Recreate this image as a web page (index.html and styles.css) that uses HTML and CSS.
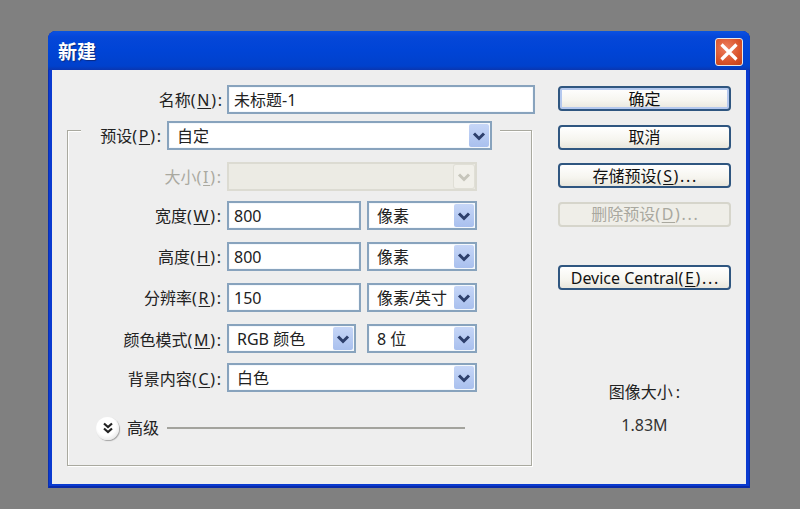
FILE: index.html
```html
<!DOCTYPE html>
<html lang="zh">
<head>
<meta charset="utf-8">
<title>新建</title>
<link rel="stylesheet" href="styles.css">
</head>
<body>
<svg class="defs" width="0" height="0" aria-hidden="true"><defs>
<symbol id="chev" viewBox="0 0 20 24"><path d="M5 9.5 L10 14.5 L15 9.5" fill="none" stroke="currentColor" stroke-width="3"/></symbol>
</defs></svg>
<div class="dialog">
  <div class="titlebar">
    <span class="title">新建</span>
    <span class="close"><svg viewBox="0 0 20 20" width="20" height="20"><path d="M2.5 2.5 L17.500 17.500 M17.500 2.500 L2.500 17.500" stroke="#fff" stroke-width="3.2" fill="none"/></svg></span>
  </div>
  <div class="body">
    <div class="left">
      <div class="name-row">
        <label class="lbl lbl-name">名称<span class="key">(<u>N</u>):</span></label>
        <div class="field field-name">未标题-1</div>
      </div>
      <div class="group">
        <div class="preset">
          <label class="lbl lbl-preset">预设<span class="key">(<u>P</u>):</span></label>
          <div class="select select-preset"><span class="val">自定</span><span class="arrow"><svg width="20" height="24"><use href="#chev"/></svg></span></div>
        </div>
        <div class="row row-first">
          <label class="lbl lbl-off">大小<span class="key">(<u>I</u>):</span></label>
          <div class="select select-wide is-off"><span class="val"></span><span class="arrow"><svg width="20" height="24"><use href="#chev"/></svg></span></div>
        </div>
        <div class="row gap-s">
          <label class="lbl">宽度<span class="key">(<u>W</u>):</span></label>
          <div class="field field-num">800</div>
          <div class="select select-unit"><span class="val">像素</span><span class="arrow"><svg width="20" height="24"><use href="#chev"/></svg></span></div>
        </div>
        <div class="row gap-l">
          <label class="lbl">高度<span class="key">(<u>H</u>):</span></label>
          <div class="field field-num">800</div>
          <div class="select select-unit"><span class="val">像素</span><span class="arrow"><svg width="20" height="24"><use href="#chev"/></svg></span></div>
        </div>
        <div class="row gap-l">
          <label class="lbl">分辨率<span class="key">(<u>R</u>):</span></label>
          <div class="field field-num">150</div>
          <div class="select select-unit"><span class="val">像素/英寸</span><span class="arrow"><svg width="20" height="24"><use href="#chev"/></svg></span></div>
        </div>
        <div class="row gap-l">
          <label class="lbl lbl-low">颜色模式<span class="key">(<u>M</u>):</span></label>
          <div class="select select-mode"><span class="val">RGB 颜色</span><span class="arrow"><svg width="20" height="24"><use href="#chev"/></svg></span></div>
          <div class="select select-unit"><span class="val">8 位</span><span class="arrow"><svg width="20" height="24"><use href="#chev"/></svg></span></div>
        </div>
        <div class="row gap-s">
          <label class="lbl lbl-low">背景内容<span class="key">(<u>C</u>):</span></label>
          <div class="select select-wide"><span class="val">白色</span><span class="arrow"><svg width="20" height="24"><use href="#chev"/></svg></span></div>
        </div>
        <div class="advanced">
          <span class="round"><svg width="14" height="14" viewBox="0 0 14 14"><path d="M3 2.5 L7 6 L11 2.500 M3 7.500 L7 11 L11 7.500" fill="none" stroke="#222" stroke-width="2.2"/></svg></span>
          <span class="adv-text">高级</span>
          <span class="adv-line"></span>
        </div>
      </div>
    </div>
    <div class="right">
      <button class="btn btn-default">确定</button>
      <button class="btn">取消</button>
      <button class="btn">存储预设<span class="key">(<u>S</u>)...</span></button>
      <button class="btn btn-off">删除预设<span class="key">(<u>D</u>)...</span></button>
      <button class="btn btn-device">Device Central<span class="key">(<u>E</u>)...</span></button>
      <div class="size-label">图像大小<span class="colon">:</span></div>
      <div class="size-value">1.83M</div>
    </div>
  </div>
</div>
</body>
</html>
```
FILE: styles.css
```css
* { box-sizing: border-box; }
html, body { margin: 0; height: 100%; }
body {
  background: #808080;
  padding: 31px 50px 21px 48px;
  font: 16px/1 "Noto Sans", "Noto Sans CJK SC", sans-serif;
  color: #222;
  overflow: hidden;
}
.defs { position: absolute; }
u { text-underline-offset: 2px; }
.key { letter-spacing: 1.7px; margin-right: -1.7px; }
.colon { margin-left: 3px; }
.dialog {
  height: 457px;
  display: flex;
  flex-direction: column;
  background: #0a3ad0;
  border-radius: 8px 8px 0 0;
  box-shadow: inset 1px 0 #0a2fb0, inset -1px 0 #0a2fb0, inset 0 -2px #0a2aa8;
  padding: 0 4px 4px;
}
.titlebar {
  height: 39px;
  margin: 0 -4px;
  padding: 7px 7px 0 10px;
  flex: none;
  display: flex;
  justify-content: space-between;
  align-items: flex-start;
  border-radius: 8px 8px 0 0;
  background: linear-gradient(#0a55dc 0, #0a4de0 2px, #0547d8 6px, #0044d6 50%, #0041cc 90%, #0a36b0 100%);
}
.title {
  font-size: 19px;
  font-weight: 700;
  color: #fff;
  line-height: 28px;
  text-shadow: 1px 1px 1px #0a2a80;
}
.close {
  width: 28px;
  height: 28px;
  display: flex;
  align-items: center;
  justify-content: center;
  border: 1px solid #e8e8e8;
  border-radius: 3px;
  background: radial-gradient(circle at 40% 35%, #ee8060, #d9532a 60%, #c23e18);
}
.body {
  flex: 1;
  display: flex;
  background: #eeeeee;
  padding: 15px 15px 0;
  gap: 23px;
}
.left { width: 468px; }
.name-row { display: flex; height: 29px; }
.lbl {
  display: flex;
  align-items: center;
  justify-content: flex-end;
  white-space: pre;
  flex: none;
  width: 154px;
  margin-right: 6px;
}
.lbl-name { width: 155px; margin-right: 5px; }
.lbl-off { color: #aaa9a0; }
.lbl-low { padding-top: 2px; }
.field, .select {
  display: flex;
  align-items: center;
  height: 29px;
  background: #fff;
  border: 2px solid #88a3bd;
  box-shadow: inset 0 0 0 1px #f4f8fc;
  white-space: nowrap;
}
.field { padding-left: 5px; }
.field-name { width: 308px; }
.field-num { width: 134px; margin-right: 6px; }
.select { justify-content: space-between; padding-left: 8px; }
.val { padding-top: 1px; }
.select-preset { width: 325px; }
.select-wide { width: 250px; }
.select-unit { width: 110px; }
.select-mode { width: 129px; margin-right: 11px; }
.arrow {
  flex: none;
  width: 20px;
  height: 23px;
  margin-right: 1px;
  color: #2d3f6c;
  background: linear-gradient(#c6d6f7, #a9c0ee);
  border-radius: 2px;
}
.arrow svg { display: block; }
.is-off { background: #ecebe4; border-color: #dcdbd2; box-shadow: none; }
.is-off .arrow { background: #f1f0ea; color: #c6c5bb; box-shadow: 0 0 0 1px #e0dfd6; }
.group {
  width: 465px;
  height: 336px;
  margin-top: 16px;
  border: 1px solid #a9a99f;
  box-shadow: 1px 1px 0 #fff, inset 1px 1px 0 #fff;
}
.preset {
  display: flex;
  width: fit-content;
  height: 29px;
  margin: -10px 0 0 13px;
  padding-right: 8px;
  background: #eeeeee;
}
.lbl-preset { width: 80px; }
.row { display: flex; height: 29px; }
.row-first { margin-top: 12px; }
.row .lbl { width: 153px; }
.gap-s { margin-top: 10px; }
.gap-l { margin-top: 12px; }
.advanced {
  display: flex;
  align-items: center;
  margin: 24px 66px 0 28px;
  height: 24px;
}
.round {
  width: 23px;
  height: 23px;
  border-radius: 50%;
  display: flex;
  align-items: center;
  justify-content: center;
  background: radial-gradient(circle at 45% 40%, #fff 50%, #e2e2e2 85%);
  box-shadow: 1px 1px 1px #a5a5a5;
}
.adv-text { margin-left: 8px; }
.adv-line { flex: 1; height: 2px; margin-left: 8px; background: #a3a39d; }
.right {
  width: 173px;
  display: flex;
  flex-direction: column;
  padding-top: 1px;
  align-items: center;
}
.btn {
  width: 173px;
  height: 25px;
  flex: none;
  padding: 0;
  margin-bottom: 13.5px;
  font: inherit;
  color: #111;
  line-height: 1;
  border: 2px solid #2f5680;
  border-radius: 4px;
  background: linear-gradient(#ffffff, #f6f5ef 60%, #e8e6dc);
  white-space: nowrap;
}
.btn-default { box-shadow: inset 0 0 0 2px #b4c8ee; }
.btn-off { color: #a9a89f; border-color: #d6d5cb; background: #efeee8; }
.btn-device { margin-top: 25px; }
.size-label { margin-top: 80px; }
.size-value { margin-top: 17px; color: #333; }
```
